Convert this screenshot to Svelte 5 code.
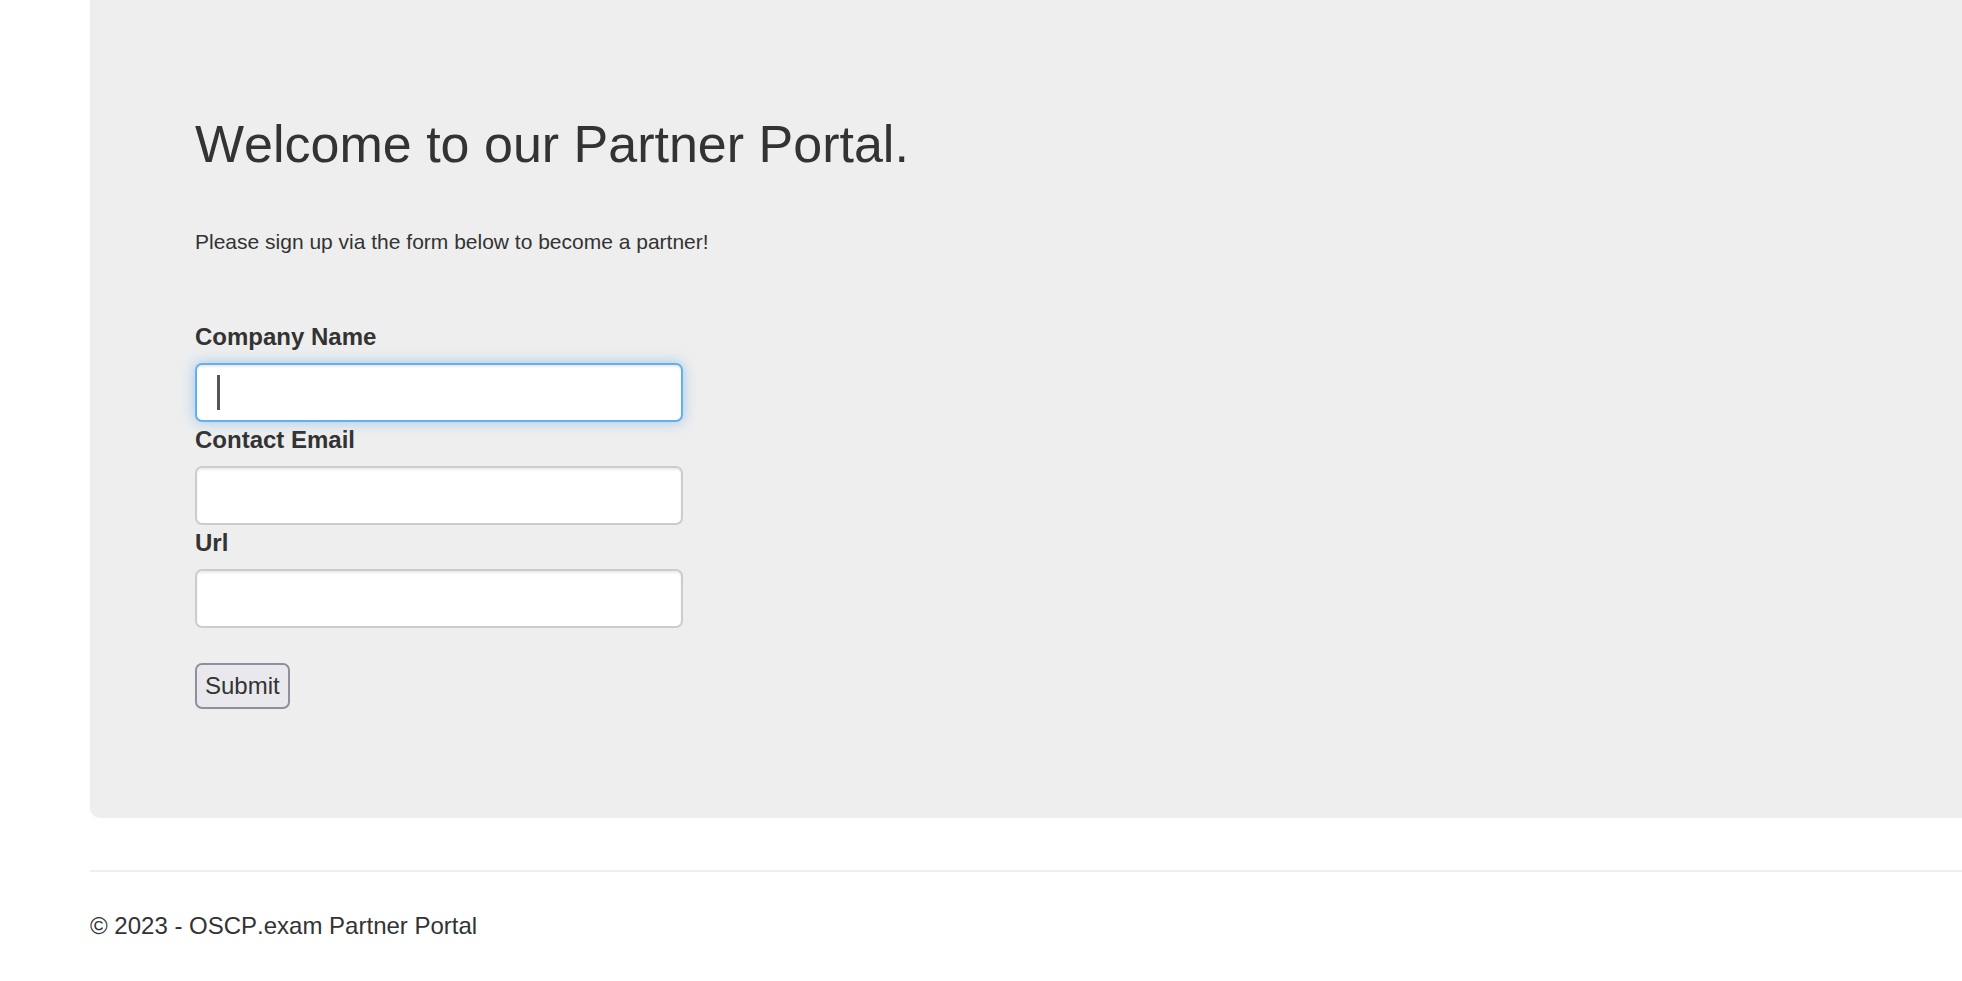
<script>
  import { onMount } from 'svelte';

  let company = $state('');
  let email = $state('');
  let url = $state('');
  let focused = $state(false);
  let first;

  onMount(() => first.focus());
</script>

<div class="page">
  <main class="hero">
    <h1>Welcome to our Partner Portal.</h1>
    <p>Please sign up via the form below to become a partner!</p>
    <form onsubmit={(e) => e.preventDefault()}>
      <label for="company">Company Name</label>
      <div class="field" class:empty={focused && !company}>
        <input
          id="company"
          type="text"
          bind:value={company}
          bind:this={first}
          onfocus={() => (focused = true)}
          onblur={() => (focused = false)}
        />
      </div>
      <label for="email">Contact Email</label>
      <div class="field"><input id="email" type="text" bind:value={email} /></div>
      <label for="url">Url</label>
      <div class="field"><input id="url" type="text" bind:value={url} /></div>
      <button type="submit">Submit</button>
    </form>
  </main>
  <footer>© 2023 - OSCP.exam Partner Portal</footer>
</div>

<style>
  :global(body) {
    margin: 0;
    background: #fff;
  }
  .page {
    padding-left: 90px;
    font-family: 'Liberation Sans', Arial, sans-serif;
    font-size: 24px;
    font-kerning: none;
    line-height: 36px;
    color: #333;
  }
  .hero {
    padding: 112px 105px 109px;
    background: #eee;
    border-bottom-left-radius: 10px;
  }
  h1 {
    margin: 0;
    font-size: 52px;
    font-weight: 400;
    line-height: 64px;
  }
  p {
    margin: 48px 0 59px;
    font-size: 21px;
  }
  form {
    display: flex;
    flex-direction: column;
    align-items: flex-start;
  }
  label {
    margin-bottom: 8px;
    font-weight: 700;
  }
  .field {
    position: relative;
    display: flex;
    width: 100%;
    max-width: 488px;
  }
  /* Thick insertion bar while the focused field is empty */
  .empty::after {
    content: '';
    position: absolute;
    top: 12px;
    left: 22px;
    width: 3px;
    height: 35px;
    background: #555;
    pointer-events: none;
  }
  .empty input {
    caret-color: transparent;
  }
  input {
    box-sizing: border-box;
    width: 100%;
    height: 59px;
    padding: 0 22px;
    border: 2px solid #ccc;
    border-radius: 7px;
    background: #fff;
    box-shadow: inset 0 2px 2px rgba(0, 0, 0, 0.075);
    font: inherit;
    color: #555;
    outline: 0;
  }
  input:focus {
    border-color: #66afe9;
    box-shadow: inset 0 2px 2px rgba(0, 0, 0, 0.075), 0 0 14px rgba(102, 175, 233, 0.6);
  }
  button {
    box-sizing: border-box;
    height: 46px;
    margin-top: 35px;
    padding: 0 8px;
    border: 2px solid #8f8f9d;
    border-radius: 7px;
    background: #e9e9ed;
    font: inherit;
    font-kerning: none;
    color: #333;
  }
  footer {
    margin-top: 52px;
    padding: 36px 0;
    border-top: 2px solid #eee;
  }
</style>
